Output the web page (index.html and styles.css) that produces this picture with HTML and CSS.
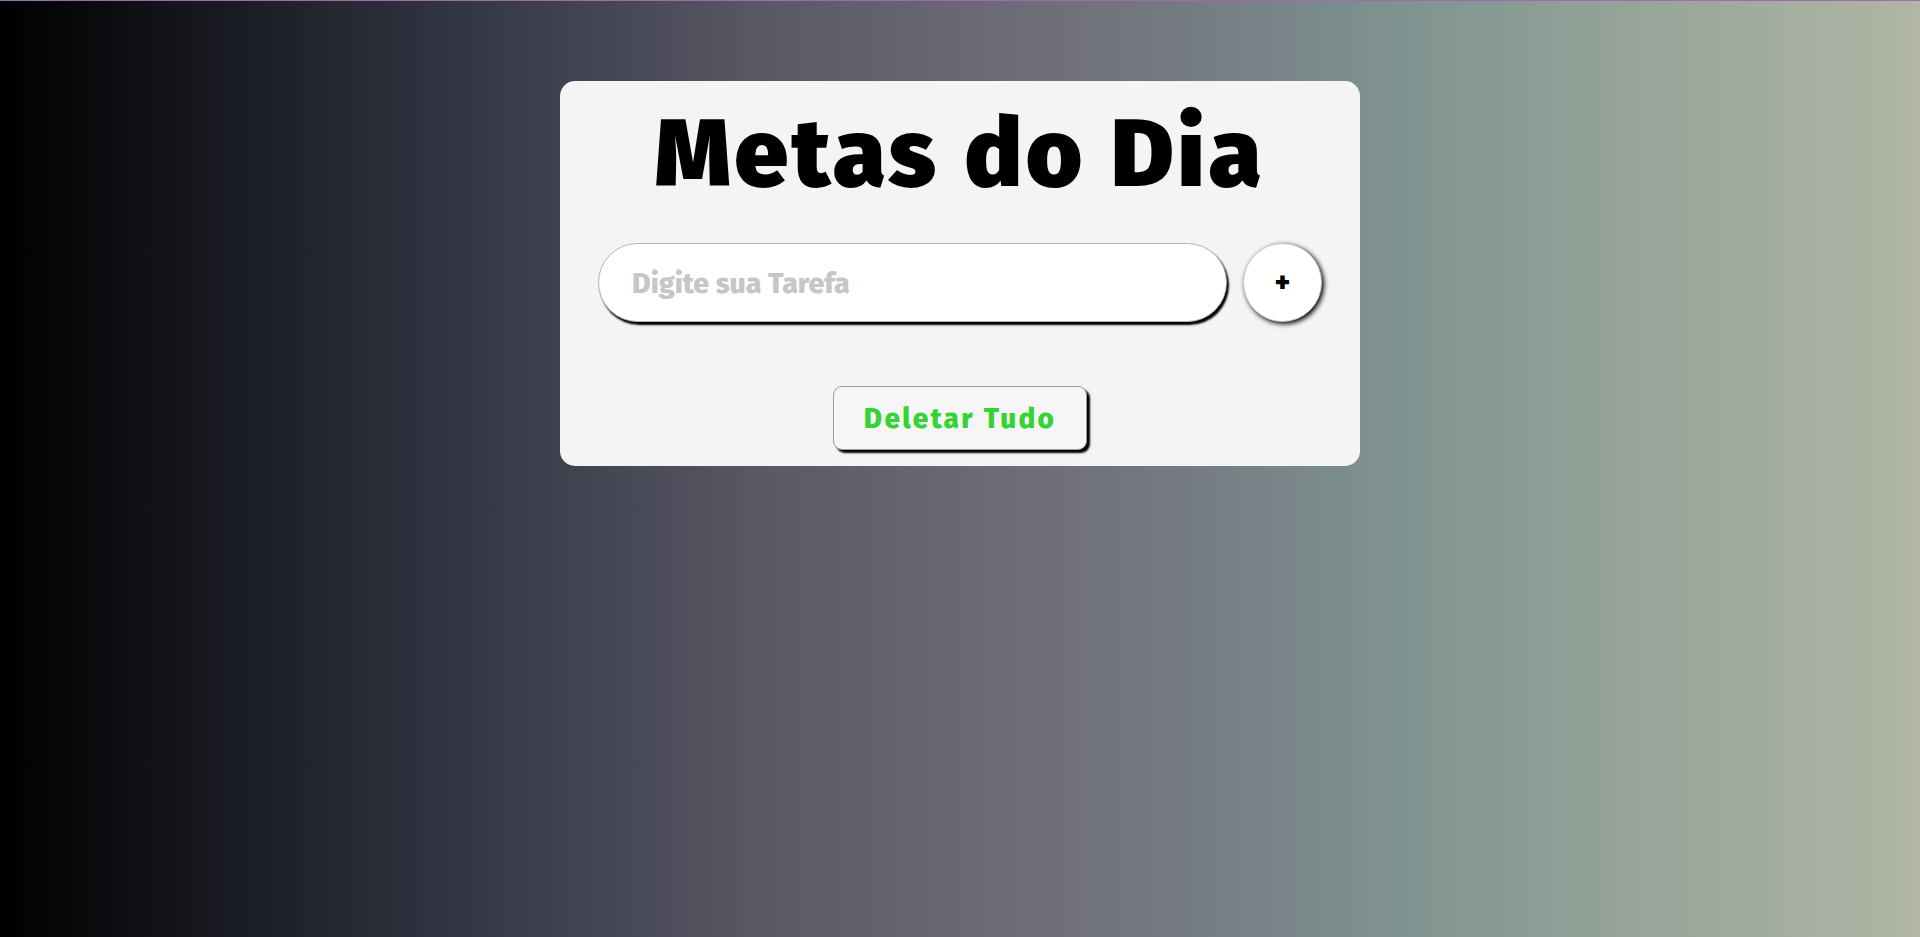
FILE: index.html
```html
<!DOCTYPE html>
<html lang="pt-BR">
<head>
<meta charset="utf-8">
<title>Metas do Dia</title>
<link rel="stylesheet" href="styles.css">
</head>
<body>
  <main class="card">
    <h1 class="title">Metas do Dia</h1>
    <div class="entry">
      <input class="task-input" type="text" placeholder="Digite sua Tarefa">
      <button class="add-btn" type="button">+</button>
    </div>
    <ul class="task-list"></ul>
    <div class="actions">
      <button class="delete-all" type="button">Deletar Tudo</button>
    </div>
  </main>
</body>
</html>
```

FILE: styles.css
```css
* {
  box-sizing: border-box;
}

html, body {
  height: 100%;
}

body {
  margin: 0;
  border-top: 1px solid #9a6fa8;
  font-family: "Fira Sans", Lato, "Noto Sans", sans-serif;
  background: linear-gradient(to right, #000000 0%, #1e2028 14%, #353846 25%, #5a5966 40%, #6b6774 50%, #757b83 62%, #7f9390 73%, #98a59a 86%, #b1b6a5 100%);
}

.card {
  width: 800px;
  margin: 80px auto 0;
  padding: 15px 38px 16px;
  background: #f4f4f4;
  border-radius: 15px;
}

.title {
  margin: 0;
  text-align: center;
  font-size: 96px;
  font-weight: 900;
  line-height: 1.2;
  color: #000;
  letter-spacing: 3.8px;
}

.entry {
  display: flex;
  gap: 16px;
  margin-top: 32px;
}

.task-input {
  flex: 1;
  height: 79px;
  padding: 2px 0 0 33px;
  border: 1px solid #b4b4b4;
  border-radius: 40px;
  background: #fff;
  box-shadow: 2px 3px 2px #000;
  font-family: inherit;
  font-size: 28.5px;
  font-weight: 800;
  color: #333;
  outline: none;
}

.task-input::placeholder {
  color: #c6c6c6;
}

.add-btn {
  width: 79px;
  height: 79px;
  flex: none;
  border: 1px solid #c8c8c8;
  border-radius: 50%;
  background: #fff;
  box-shadow: 2px 2px 5px #000;
  font-family: inherit;
  font-size: 28px;
  font-weight: 900;
  color: #000;
  padding: 0;
  line-height: 1;
}

.task-list {
  list-style: none;
  margin: 0;
  padding: 0;
}

.actions {
  display: flex;
  justify-content: center;
  margin-top: 64px;
}

.delete-all {
  width: 254px;
  height: 64px;
  border: 1px solid #9a9a9a;
  border-radius: 9px;
  background: #f6f6f6;
  box-shadow: 3px 3px 2px #000;
  font-family: inherit;
  font-size: 28px;
  font-weight: 800;
  letter-spacing: 2.3px;
  color: #33d433;
  padding: 0;
}
```
